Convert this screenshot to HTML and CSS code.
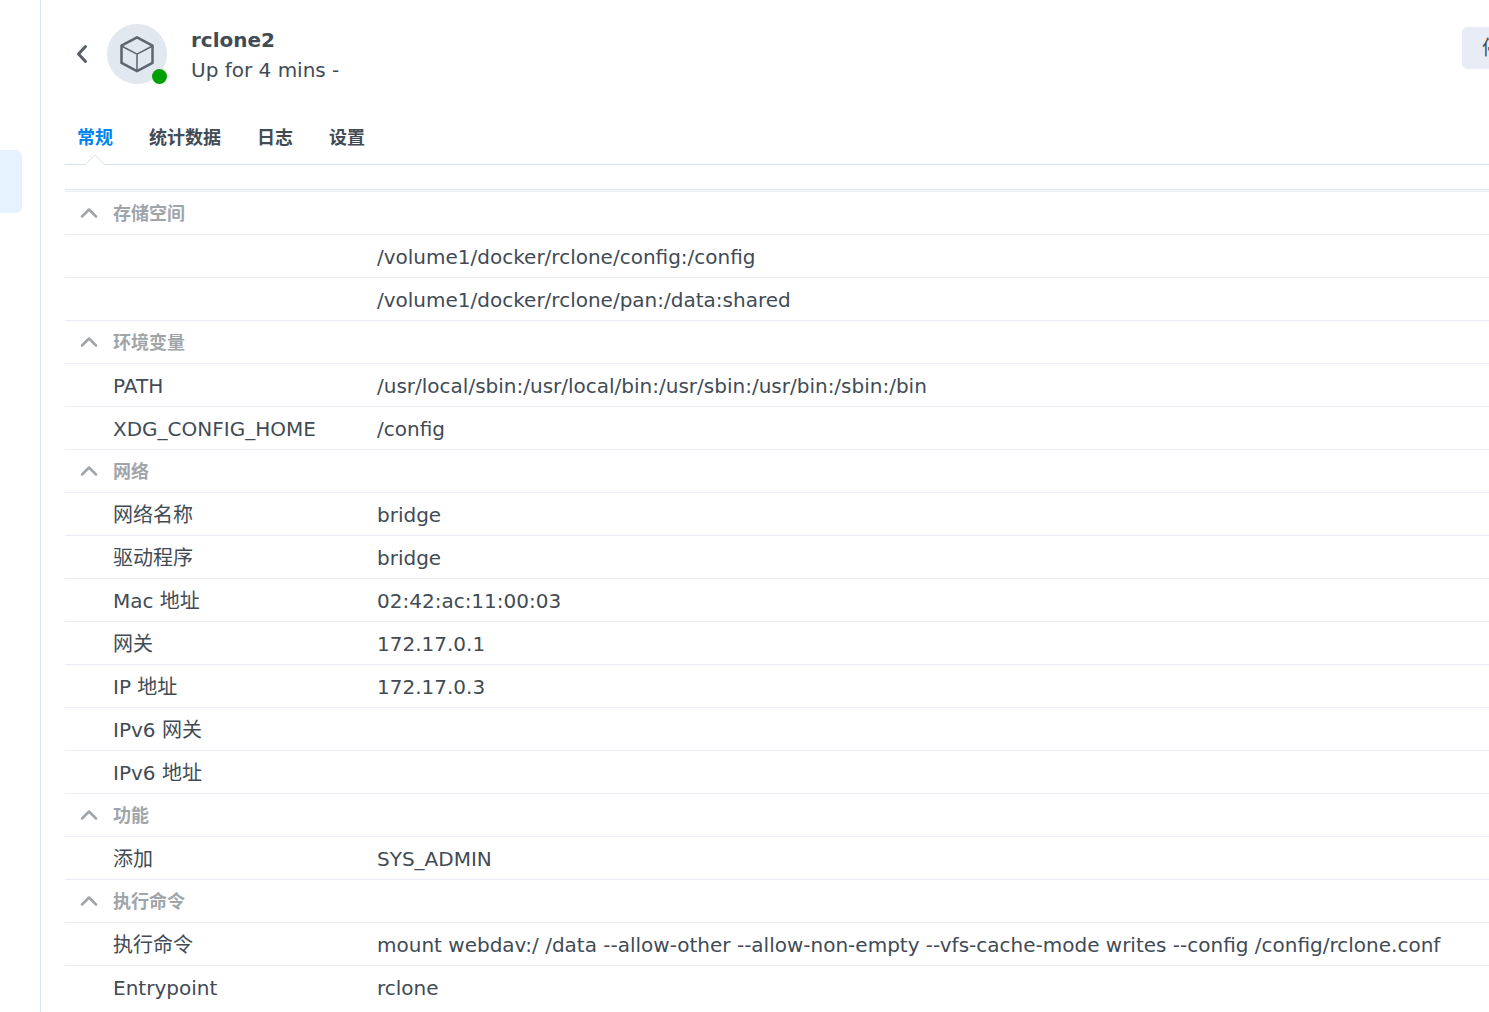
FILE: index.html
```html
<!DOCTYPE html>
<html lang="zh-CN">
<head>
  <meta charset="UTF-8">
  <meta name="viewport" content="width=device-width, initial-scale=1.0">
  <title>rclone2</title>
  <link rel="stylesheet" href="styles.css">
</head>
<body>
  <div class="app">
    <aside class="sidebar">
      <div class="sidebar-item"></div>
    </aside>

    <main class="detail">
      <header class="detail-header">
        <button class="back" type="button" aria-label="返回">
          <svg width="12" height="20" viewBox="0 0 12 20"><path d="M9.500 2.500L2.500 10l7 7.500"/></svg>
        </button>
        <div class="avatar">
          <svg width="60" height="60" viewBox="0 0 60 60">
            <path class="cube-edge" d="M14.500 22L30 30.200 45.500 22M30 30.200V46"/>
            <path class="cube" d="M30 13.300l15.500 8.300v17.300L30 47.200l-15.500-8.300V21.600z"/>
          </svg>
          <span class="status-dot"></span>
        </div>
        <div class="title">
          <h1>rclone2</h1>
          <p>Up for 4 mins -</p>
        </div>
        <button class="action" type="button">停止</button>
      </header>

      <nav class="tabs">
        <a class="tab active" href="#general">常规
          <svg class="notch" width="22" height="12" viewBox="0 0 22 12"><path class="notch-fill" d="M1 11L11 1l10 10v1H1z"/><path class="notch-line" d="M0 10.500h1.500L11 1l9.500 9.500H22"/></svg>
        </a>
        <a class="tab" href="#stats">统计数据</a>
        <a class="tab" href="#log">日志</a>
        <a class="tab" href="#settings">设置</a>
      </nav>

      <div class="list" id="general">
        <table>
          <colgroup>
            <col class="col-name">
            <col>
          </colgroup>
          <tbody>
            <tr class="group">
              <th colspan="2"><button type="button"><svg width="18" height="12" viewBox="0 0 18 12"><path d="M2 9.500L9 2.500l7 7"/></svg>存储空间</button></th>
            </tr>
            <tr><td></td><td>/volume1/docker/rclone/config:/config</td></tr>
            <tr><td></td><td>/volume1/docker/rclone/pan:/data:shared</td></tr>
          </tbody>
          <tbody>
            <tr class="group">
              <th colspan="2"><button type="button"><svg width="18" height="12" viewBox="0 0 18 12"><path d="M2 9.500L9 2.500l7 7"/></svg>环境变量</button></th>
            </tr>
            <tr><td>PATH</td><td>/usr/local/sbin:/usr/local/bin:/usr/sbin:/usr/bin:/sbin:/bin</td></tr>
            <tr><td>XDG_CONFIG_HOME</td><td>/config</td></tr>
          </tbody>
          <tbody>
            <tr class="group">
              <th colspan="2"><button type="button"><svg width="18" height="12" viewBox="0 0 18 12"><path d="M2 9.500L9 2.500l7 7"/></svg>网络</button></th>
            </tr>
            <tr><td>网络名称</td><td>bridge</td></tr>
            <tr><td>驱动程序</td><td>bridge</td></tr>
            <tr><td>Mac 地址</td><td>02:42:ac:11:00:03</td></tr>
            <tr><td>网关</td><td>172.17.0.1</td></tr>
            <tr><td>IP 地址</td><td>172.17.0.3</td></tr>
            <tr><td>IPv6 网关</td><td></td></tr>
            <tr><td>IPv6 地址</td><td></td></tr>
          </tbody>
          <tbody>
            <tr class="group">
              <th colspan="2"><button type="button"><svg width="18" height="12" viewBox="0 0 18 12"><path d="M2 9.500L9 2.500l7 7"/></svg>功能</button></th>
            </tr>
            <tr><td>添加</td><td>SYS_ADMIN</td></tr>
          </tbody>
          <tbody>
            <tr class="group">
              <th colspan="2"><button type="button"><svg width="18" height="12" viewBox="0 0 18 12"><path d="M2 9.500L9 2.500l7 7"/></svg>执行命令</button></th>
            </tr>
            <tr><td>执行命令</td><td>mount webdav:/ /data --allow-other --allow-non-empty --vfs-cache-mode writes --config /config/rclone.conf</td></tr>
            <tr class="last"><td>Entrypoint</td><td>rclone</td></tr>
          </tbody>
        </table>
      </div>
    </main>
  </div>
</body>
</html>
```
FILE: styles.css
```css
* {
  box-sizing: border-box;
}

body {
  margin: 0;
  font-family: Verdana, 'DejaVu Sans', 'Noto Sans CJK SC', sans-serif;
  font-size: 20px;
  line-height: 30px;
  color: #414b55;
  background-color: #fff;
  overflow: hidden;
}

button {
  padding: 0;
  border: 0;
  background: none;
  font: inherit;
  color: inherit;
  cursor: pointer;
}

svg {
  display: block;
  fill: none;
  stroke-linecap: round;
  stroke-linejoin: round;
}

.app {
  display: flex;
  height: 100vh;
  overflow: hidden;
}

.sidebar {
  flex: none;
  width: 41px;
  padding: 150px 18px 0 0;
  border-right: 1px solid #dfe6ee;
}

.sidebar-item {
  height: 63px;
  background-color: #e6f2ff;
  border-radius: 0 6px 6px 0;
}

/* the pane runs past the right edge of the window */
.detail {
  flex: 1;
  min-width: 0;
  margin-right: -77px;
  padding: 24px 24px 0;
}

.detail-header {
  display: flex;
  align-items: center;
  height: 60px;
  padding-left: 11px;
}

.back {
  margin-right: 19px;
}

.back svg {
  stroke: #555f69;
  stroke-width: 3;
}

.avatar {
  position: relative;
  width: 60px;
  height: 60px;
  margin-right: 24px;
  border-radius: 50%;
  background-color: #e1e8ef;
}

.cube {
  stroke: #5c6670;
  stroke-width: 2.5;
}

.cube-edge {
  stroke: #5c6670;
  stroke-width: 1.5;
}

.status-dot {
  position: absolute;
  right: 0;
  bottom: 0;
  width: 15px;
  height: 15px;
  border-radius: 50%;
  background-color: #00a000;
}

.title {
  padding-top: 2px;
}

.title h1,
.title p {
  margin: 0;
  font-size: 20px;
}

.action {
  height: 42px;
  margin: 0 0 12px auto;
  padding: 0 20px;
  border-radius: 5px;
  background-color: #e8edf5;
}

.tabs {
  display: flex;
  gap: 36px;
  margin-top: 33px;
  padding: 0 12px;
  height: 48px;
  border-bottom: 1px solid #d7e1eb;
  font-size: 18px;
  font-weight: bold;
  line-height: 42px;
}

.tab {
  position: relative;
  color: inherit;
  text-decoration: none;
}

.tab.active {
  color: #0086f0;
}

.notch {
  position: absolute;
  left: 7px;
  bottom: -2px;
}

.notch-fill {
  fill: #fff;
}

.notch-line {
  stroke: #d7e1eb;
}

.list {
  margin-top: 24px;
  padding-top: 1px;
  border-top: 1px solid #d7e1eb;
}

table {
  width: 100%;
  border-top: 1px solid #e8edf5;
  border-spacing: 0;
  table-layout: fixed;
}

.col-name {
  width: 300px;
}

th,
td {
  height: 43px;
  padding: 2px 0 0 48px;
  border-bottom: 1px solid #e8edf5;
  text-align: left;
  white-space: nowrap;
}

td + td {
  padding-left: 12px;
}

.last td {
  border-bottom-color: transparent;
}

.group th {
  padding-left: 15px;
}

.group button {
  display: flex;
  align-items: center;
  gap: 15px;
  font-size: 18px;
  font-weight: bold;
  color: #a0a5aa;
}

.group svg {
  margin-bottom: 2px;
  stroke: #a0a5aa;
  stroke-width: 2.5;
}
```
